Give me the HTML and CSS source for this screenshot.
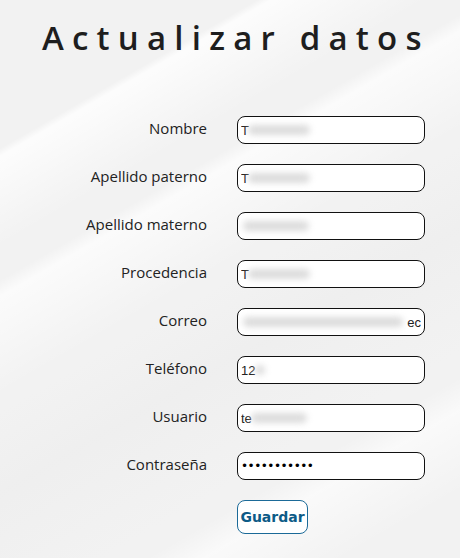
FILE: index.html
```html
<!DOCTYPE html>
<html lang="es">
<head>
<meta charset="utf-8">
<title>Actualizar datos</title>
<link rel="stylesheet" href="styles.css">
</head>
<body>
<main class="page">
  <h1 class="title">Actualizar datos</h1>
  <form class="form">
    <label class="label" for="f1">Nombre</label>
    <div class="field"><input id="f1" class="input" type="text" value="T"><span class="blur b1"></span></div>
    <label class="label" for="f2">Apellido paterno</label>
    <div class="field"><input id="f2" class="input" type="text" value="T"><span class="blur b1"></span></div>
    <label class="label" for="f3">Apellido materno</label>
    <div class="field"><input id="f3" class="input" type="text" value=""><span class="blur b3"></span></div>
    <label class="label" for="f4">Procedencia</label>
    <div class="field"><input id="f4" class="input" type="text" value="T"><span class="blur b1"></span></div>
    <label class="label" for="f5">Correo</label>
    <div class="field"><input id="f5" class="input input-end" type="text" value="ec"><span class="blur b5"></span></div>
    <label class="label" for="f6">Teléfono</label>
    <div class="field"><input id="f6" class="input" type="text" value="12"><span class="blur b6"></span></div>
    <label class="label" for="f7">Usuario</label>
    <div class="field"><input id="f7" class="input" type="text" value="te"><span class="blur b7"></span></div>
    <label class="label" for="f8">Contraseña</label>
    <div class="field"><input id="f8" class="input input-pass" type="password" value="12345678901"></div>
    <span></span>
    <div class="actions"><button type="button" class="btn">Guardar</button></div>
  </form>
</main>
</body>
</html>
```
FILE: styles.css
```css
html, body {
  margin: 0;
  height: 100%;
}
body {
  font-family: "Open Sans", "Noto Sans", sans-serif;
  color: #222;
  background-color: #f2f2f2;
  background-image:
    linear-gradient(150deg, rgba(255,255,255,0) 0%, rgba(255,255,255,0) 18%, rgba(255,255,255,0.8) 19%, rgba(255,255,255,0) 30%, rgba(255,255,255,0) 100%),
    linear-gradient(150deg, rgba(255,255,255,0) 34%, rgba(255,255,255,0.7) 36%, rgba(255,255,255,0) 48%),
    linear-gradient(150deg, rgba(235,235,235,0) 50%, rgba(238,238,238,0.8) 60%, rgba(245,245,245,0) 75%),
    linear-gradient(150deg, rgba(255,255,255,0) 78%, rgba(255,255,255,0.6) 82%, rgba(255,255,255,0) 92%);
  overflow: hidden;
}
.page {
  padding: 16px 0 0;
}
.title {
  margin: 0;
  padding-left: 42px;
  font-size: 33px;
  font-weight: 600;
  letter-spacing: 8.2px;
  line-height: 44px;
  color: #1e1e1e;
}
.form {
  display: grid;
  grid-template-columns: 207px 188px;
  column-gap: 30px;
  row-gap: 20px;
  margin-top: 56px;
  align-items: center;
}
.label {
  text-align: right;
  font-size: 15px;
  line-height: 20px;
  padding-bottom: 4px;
  color: #222;
}
.field {
  position: relative;
  height: 28px;
}
.input {
  box-sizing: border-box;
  width: 188px;
  height: 28px;
  border: 1px solid #111;
  border-radius: 8px;
  background: #fff;
  padding: 0 3px;
  font-family: "Liberation Sans", Arial, sans-serif;
  font-size: 13px;
  color: #222;
  outline: none;
}
.input-pass {
  font-family: "DejaVu Sans", Verdana, sans-serif;
  font-size: 12px;
  letter-spacing: -0.5px;
  color: #000;
}
.input-end {
  text-align: right;
}
.blur {
  position: absolute;
  top: 9px;
  height: 10px;
  background: #dcdcdc;
  filter: blur(3px);
  border-radius: 5px;
}
.b1 { left: 11px; width: 62px; }
.b3 { left: 6px; width: 66px; }
.b5 { left: 6px; width: 160px; }
.b6 { left: 18px; width: 10px; }
.b7 { left: 14px; width: 56px; }
.btn {
  box-sizing: border-box;
  width: 71px;
  height: 34px;
  border: 1px solid #1b6a98;
  border-radius: 8px;
  background: #fff;
  color: #0d5b87;
  font-family: "DejaVu Sans", Verdana, sans-serif;
  font-weight: bold;
  font-size: 14px;
  padding: 0;
}
```
